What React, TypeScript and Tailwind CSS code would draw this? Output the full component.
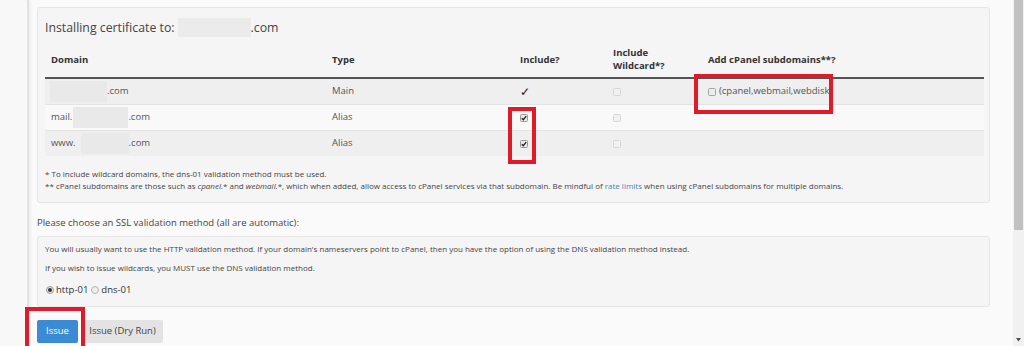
import React from "react";

function CheckedBox() {
  return (
    <span className="inline-flex w-[8px] h-[8px] items-center justify-center rounded-[1.5px] border border-[#9a9a9a] bg-[#e9e9e9] align-middle">
      <svg width="6" height="6" viewBox="0 0 6 6">
        <path d="M0.8 3.2 L2.3 4.7 L5.2 1.2" fill="none" stroke="#222" strokeWidth="1.3" />
      </svg>
    </span>
  );
}

function DisabledBox() {
  return <span className="inline-block w-[8px] h-[8px] rounded-[1.5px] border border-[#d6d6d6] bg-[#f1f1f1] align-middle" />;
}

function EmptyBox() {
  return <span className="inline-block w-[8px] h-[8px] rounded-[1.5px] border border-[#a5a5a5] bg-[#ececec] align-middle" />;
}

function Blank({ w }: { w: string }) {
  return <span className={`inline-block h-[21px] bg-[#e9e9e9] align-middle ${w}`} />;
}

const cols = "grid grid-cols-[281px_188px_93px_95px_1fr]";

export default function App() {
  return (
    <div className="w-[1024px] h-[346px] flex overflow-hidden bg-[#fafafa] text-[#333] font-['Open_Sans',sans-serif]">
      {/* left strip */}
      <div className="w-[29px] shrink-0 bg-[#f8f8f8] border-r-2 border-[#e2e2e2] shadow-[1px_0_3px_rgba(0,0,0,0.08)]" />

      {/* main */}
      <div className="relative flex-1 pl-[8px] pr-[23px]">
        {/* panel 1 */}
        <div className="mt-[7px] rounded-[3px] border border-[#e6e6e6] bg-[#f5f5f5] pl-[7px] pr-[5px] pt-[10px] pb-[10px]">
          <div className="flex items-center text-[12.3px] leading-[19px] text-[#444]">
            <span>Installing certificate to:</span>
            <span className="ml-[3px] inline-block w-[73px] h-[19px] bg-[#ebebeb]" />
            <span>.com</span>
          </div>

          {/* table */}
          <div className="mt-[4px] text-[9.5px]">
            <div className={`${cols} items-center h-[38px] border-b-2 border-[#555] font-bold leading-[13px]`}>
              <div className="pl-[6px]">Domain</div>
              <div className="pl-[6px]">Type</div>
              <div className="pl-[6px]">Include?</div>
              <div className="pl-[6px]">
                Include
                <br />
                Wildcard*?
              </div>
              <div className="pl-[6px]">Add cPanel subdomains**?</div>
            </div>

            <div className={`${cols} items-center h-[25px] bg-[#efefef] text-[#555]`}>
              <div className="pl-[5px] flex items-center">
                <Blank w="w-[57px]" />
                <span>.com</span>
              </div>
              <div className="pl-[6px]">Main</div>
              <div className="pl-[6px] text-[12px] leading-[14px] text-[#222]">✓</div>
              <div className="pl-[6px] flex items-center"><DisabledBox /></div>
              <div className="pl-[6px] flex items-center gap-[3px]">
                <EmptyBox />
                <span>(cpanel,webmail,webdisk)</span>
              </div>
            </div>

            <div className={`${cols} items-center h-[26px] border-t border-[#e3e3e3] bg-[#f9f9f9] text-[#555]`}>
              <div className="pl-[6px] flex items-center">
                <span>mail.</span>
                <span className="ml-[1px]"><Blank w="w-[55px]" /></span>
                <span>.com</span>
              </div>
              <div className="pl-[6px]">Alias</div>
              <div className="pl-[6px] flex items-center"><CheckedBox /></div>
              <div className="pl-[6px] flex items-center"><DisabledBox /></div>
              <div />
            </div>

            <div className={`${cols} items-center h-[26px] border-t border-[#e3e3e3] bg-[#efefef] text-[#555]`}>
              <div className="pl-[6px] flex items-center">
                <span>www.</span>
                <span className="ml-[5px]"><Blank w="w-[48px]" /></span>
                <span>.com</span>
              </div>
              <div className="pl-[6px]">Alias</div>
              <div className="pl-[6px] flex items-center"><CheckedBox /></div>
              <div className="pl-[6px] flex items-center"><DisabledBox /></div>
              <div />
            </div>
          </div>

          {/* notes */}
          <div className="mt-[12px] text-[8px] leading-[12px] text-[#444]">
            <div>* To include wildcard domains, the dns-01 validation method must be used.</div>
            <div>
              ** cPanel subdomains are those such as <i>cpanel.</i>* and <i>webmail.</i>*, which when added, allow access to cPanel services via that subdomain. Be mindful of{" "}
              <span className="text-[#4d82bb]">rate limits</span> when using cPanel subdomains for multiple domains.
            </div>
          </div>
        </div>

        {/* choose method */}
        <div className="mt-[13px] text-[9.5px] leading-[14px] text-[#444]">
          Please choose an SSL validation method (all are automatic):
        </div>

        {/* panel 2 */}
        <div className="mt-[6px] rounded-[3px] border border-[#e6e6e6] bg-[#f5f5f5] pl-[7px] pt-[6px] pb-[9px] text-[8px] leading-[12px] text-[#444]">
          <div>You will usually want to use the HTTP validation method. If your domain&apos;s nameservers point to cPanel, then you have the option of using the DNS validation method instead.</div>
          <div className="mt-[7px]">If you wish to issue wildcards, you MUST use the DNS validation method.</div>
          <div className="mt-[9px] flex items-center text-[9.5px] leading-[14px] text-[#333]">
            <span className="ml-[1px] inline-flex w-[8px] h-[8px] items-center justify-center rounded-full border border-[#9c9c9c] bg-[#e8e8e8]">
              <span className="w-[4px] h-[4px] rounded-full bg-[#333]" />
            </span>
            <span className="ml-[2px]">http-01</span>
            <span className="ml-[3px] inline-block w-[8px] h-[8px] rounded-full border border-[#b5b5b5] bg-[#eeeeee]" />
            <span className="ml-[2px]">dns-01</span>
          </div>
        </div>

        {/* buttons */}
        <div className="mt-[13px] flex items-center gap-[4px]">
          <button className="h-[23px] w-[41px] rounded-[2px] bg-[#3b8bd4] text-[9.5px] text-white">Issue</button>
          <button className="h-[23px] w-[81px] rounded-[2px] bg-[#e3e3e3] text-[9.5px] text-[#444]">Issue (Dry Run)</button>
        </div>

        {/* red highlight boxes (overlays) */}
        <div className="pointer-events-none absolute left-[479px] top-[107px] w-[28px] h-[57px] border-[4px] border-[#dd1b2b]" />
        <div className="pointer-events-none absolute left-[665px] top-[74px] w-[139px] h-[40px] border-[4px] border-[#dd1b2b]" />
        <div className="pointer-events-none absolute left-[-4px] top-[307px] w-[60px] h-[44px] border-[4px] border-[#dd1b2b]" />
      </div>

      {/* scrollbar */}
      <div className="relative w-[11px] shrink-0 bg-[#f1f1f1]">
        <div className="mx-[1px] h-[230px] bg-[#c1c1c1]" />
        <svg className="absolute left-[3px] bottom-[4px]" width="5" height="4" viewBox="0 0 5 4">
          <path d="M0 0 L5 0 L2.5 3.5 Z" fill="#505050" />
        </svg>
      </div>
    </div>
  );
}
